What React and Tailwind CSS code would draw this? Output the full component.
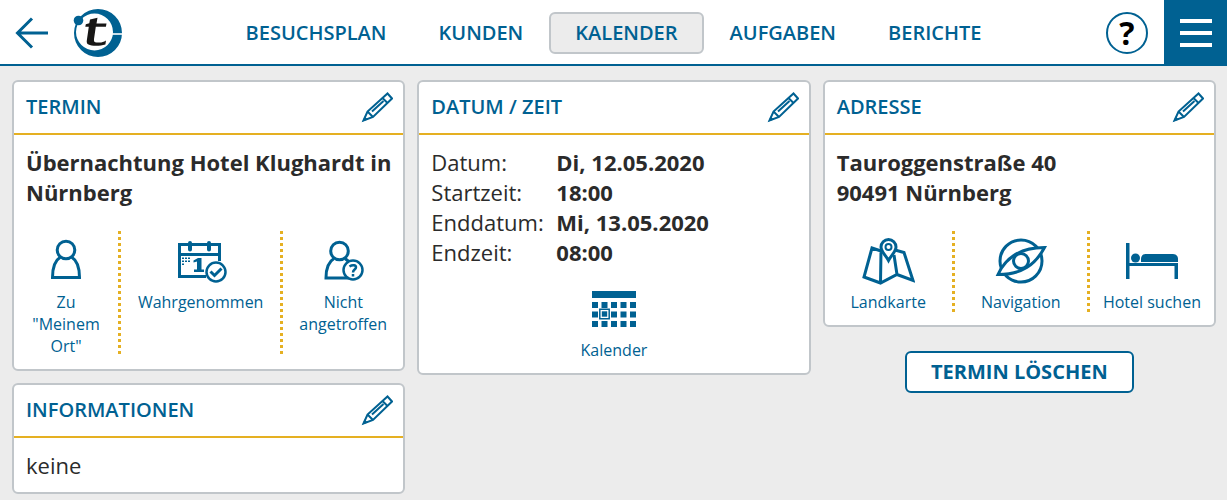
import React from 'react';

const BackIcon = () => (
  <svg width="34" height="32" viewBox="0 0 34 32" fill="none" stroke="currentColor" strokeWidth="3">
    <path d="M33 16H3M17 1.5 2.5 16 17 30.5" />
  </svg>
);

const Logo = () => (
  <svg width="50" height="50" viewBox="0 0 50 50">
    <path
      fill="#006192"
      fillRule="evenodd"
      d="M25 1a24 24 0 1 1 0 48a24 24 0 1 1 0-48ZM21.500 5.500a18.500 18.500 0 1 0 0 37a18.500 18.500 0 1 0 0-37Z"
    />
    <path fill="#fff" d="M39 25.200h11v1.600H39z" />
    <circle cx="5.500" cy="12.500" r="4.800" fill="#006192" />
    <path
      fill="#181716"
      d="M17 11.500 24.500 9.800 23.500 15.500h10l-.6 3.300H22.800L21 31c-.3 2.400.5 3.500 2.500 3.500h3c2.500 0 4-.6 6.500-2l-.6 4c-3 1-6 1.200-9 1.200-7.500 0-10.200-1.200-9.600-5.200l2-13.700h-3.500l.5-2.500 3.500-1z"
    />
  </svg>
);

const PencilIcon = () => (
  <svg width="32" height="32" viewBox="0 0 32 32" fill="none" stroke="currentColor" strokeWidth="2">
    <path d="M2.500 29.500 6.500 20.500 26.500 2.500 31 7.500 12 26zM6.500 20.500 12 26M21.500 7l5 5M11 20.500 22.500 10" />
    <path fill="currentColor" stroke="none" d="M1.500 30.500 3.500 25.500l3.500 3z" />
  </svg>
);

const PersonIcon = () => (
  <svg width="48" height="48" viewBox="0 0 48 48" fill="none" stroke="currentColor" strokeWidth="3">
    <circle cx="24" cy="13" r="8.800" />
    <path d="M18.500 20C12 24 10.500 31 10.500 40.500h27c0-9.500-1.500-16.500-8-20.500" />
  </svg>
);

const CalendarCheckIcon = () => (
  <svg width="52" height="48" viewBox="0 0 52 48" fill="none" stroke="currentColor">
    <path strokeWidth="3" d="M31 39.500H4.500v-32h40V24M4.500 17.500h40" />
    <path strokeWidth="4" strokeLinecap="round" d="M15 6v6.500M34 6v6.500" />
    <path strokeWidth="1.500" strokeDasharray="2 1" d="M7 21.200h8M7 24.200h8M7 27.200h3" />
    <path fill="currentColor" stroke="none" d="M18.500 23.500l4.500-2.500H26.500v11.500H29v2.500H19V32.500h3v-8l-3.500 1z" />
    <circle cx="41" cy="35" r="9.500" strokeWidth="2.500" fill="#fff" />
    <path strokeWidth="3" d="M35.500 34.500 39.500 38.500 46.500 31.500" />
  </svg>
);

const PersonQuestionIcon = () => (
  <svg width="48" height="48" viewBox="0 0 48 48" fill="none" stroke="currentColor">
    <circle cx="20.500" cy="14" r="8.800" strokeWidth="3" />
    <path strokeWidth="3" d="M15 21.500C9 25 7 32 7 41h24M26 21.500l5 4" />
    <circle cx="34" cy="33" r="9.500" strokeWidth="2.500" fill="#fff" />
    <path strokeWidth="2.500" d="M30.500 29.500c3-2 6.500-1.500 6.500.8 0 2.400-3 2.200-3 5.200M34 37v2.500" />
  </svg>
);

const CalendarIcon = () => (
  <svg width="44" height="38" viewBox="0 0 44 38" fill="currentColor">
    <path d="M0 1h44v7H0z" />
    <path
      fill="none"
      stroke="currentColor"
      strokeWidth="6"
      strokeDasharray="6 3.500"
      d="M0 15h44M0 24.500h44M0 34h44"
    />
    <path fill="#fff" stroke="currentColor" strokeWidth="1.500" d="M7.800 19.300h9.400v9.400H7.800z" />
    <path d="M9.800 21.300h5.400v5.400H9.800z" />
  </svg>
);

const MapIcon = () => (
  <svg width="54" height="48" viewBox="0 0 54 48" fill="none" stroke="currentColor" strokeWidth="3">
    <path d="M20 14 11 11 3 40l16.500 6L36 37.500 52 43.500 43 15.500l-9-2.500M20 14l-.5 32M33 18l3 19.500" />
    <path fill="#fff" d="M27.500 23.500C24.500 18 20 14.500 20 10a7.500 7.500 0 0 1 15 0c0 4.500-4.500 8-7.500 13.500z" />
    <circle cx="27.500" cy="10" r="3" strokeWidth="2" />
  </svg>
);

const CompassIcon = () => (
  <svg width="54" height="48" viewBox="0 0 54 48" fill="none" stroke="currentColor" strokeWidth="3">
    <circle cx="27" cy="24" r="21" />
    <path fill="#fff" d="M4 37.500C12 20 26 10.500 50.500 10.500 41 28 28 37.500 4 37.500z" />
    <circle cx="27" cy="24" r="7.500" />
  </svg>
);

const BedIcon = () => (
  <svg width="52" height="48" viewBox="0 0 52 48" fill="currentColor">
    <path d="M0 6h3.500v20H52v16h-3.500V29h-45v13H0z" />
    <circle cx="9.500" cy="21" r="4.500" />
    <path d="M15 25v-3c0-3 1.500-5 4.500-5H47c3 0 5 2 5 5v3z" />
  </svg>
);

const NAV_ITEMS = ['Besuchsplan', 'Kunden', 'Kalender', 'Aufgaben', 'Berichte'];

const Header = ({ active }) => (
  <header className="grid grid-cols-[1fr_auto_1fr] items-center h-[66px] bg-white border-b-2 border-[#006192]">
    <div className="flex items-center gap-6 pl-[15px]">
      <button type="button" aria-label="Zurück">
        <BackIcon />
      </button>
      <a href="#start" aria-label="Startseite">
        <Logo />
      </a>
    </div>

    <nav className="flex items-center">
      {NAV_ITEMS.map((item) => (
        <a
          key={item}
          href={`#${item.toLowerCase()}`}
          className={`flex items-center h-[42px] px-6 border-2 rounded-md text-xl font-semibold uppercase ${
            item === active ? 'bg-[#ececec] border-[#c1c6ca]' : 'border-transparent'
          }`}
        >
          {item}
        </a>
      ))}
    </nav>

    <div className="flex items-center justify-end gap-4 h-[66px]">
      <button
        type="button"
        aria-label="Hilfe"
        className="flex items-center justify-center size-[42px] border-2 border-[#006192] rounded-full text-[32px] leading-none font-bold text-black"
      >
        ?
      </button>
      <button
        type="button"
        aria-label="Menü"
        className="flex flex-col items-center justify-center gap-2 w-[63px] h-full bg-[#006192]"
      >
        <span className="w-8 h-1 bg-white" />
        <span className="w-8 h-1 bg-white" />
        <span className="w-8 h-1 bg-white" />
      </button>
    </div>
  </header>
);

const Card = ({ title, children }) => (
  <section className="bg-white border-2 border-[#c1c6ca] rounded-md">
    <div className="flex items-center justify-between h-[53px] pl-3 pr-[10px] pb-[2px] border-b-2 border-[#e5b022]">
      <h2 className="text-xl font-semibold uppercase">{title}</h2>
      <button type="button" aria-label={`${title} bearbeiten`}>
        <PencilIcon />
      </button>
    </div>
    <div className="py-3 text-[22px] leading-[30px] text-[#2b2b2b]">{children}</div>
  </section>
);

const Action = ({ icon, children }) => (
  <button
    type="button"
    className="flex flex-col items-center justify-start gap-[6px] px-3 text-base leading-[22px] text-[#006192]"
  >
    <span className="flex items-center h-[54px] pt-[6px]">{icon}</span>
    <span>{children}</span>
  </button>
);

const Divider = () => (
  <div className="bg-[repeating-linear-gradient(to_bottom,#e5b022_0_3px,transparent_3px_6px)]" />
);

const DATES = [
  ['Datum:', 'Di, 12.05.2020'],
  ['Startzeit:', '18:00'],
  ['Enddatum:', 'Mi, 13.05.2020'],
  ['Endzeit:', '08:00'],
];

const App = () => {
  return (
    <div className="min-h-screen bg-[#ececec] text-[#006192] font-['Open_Sans',sans-serif]">
      <Header active="Kalender" />

      <main className="grid grid-cols-3 items-start gap-3 pt-[14px] pb-[6px] pl-3 pr-[11px]">
        <div className="flex flex-col gap-3">
          <Card title="Termin">
            <p className="pl-3 pr-2 font-bold">Übernachtung Hotel Klughardt in Nürnberg</p>
            <div className="grid grid-cols-[104fr_3px_159fr_3px_120fr] mt-6">
              <Action icon={<PersonIcon />}>Zu "Meinem Ort"</Action>
              <Divider />
              <Action icon={<CalendarCheckIcon />}>Wahrgenommen</Action>
              <Divider />
              <Action icon={<PersonQuestionIcon />}>Nicht angetroffen</Action>
            </div>
          </Card>

          <Card title="Informationen">
            <p className="px-3">keine</p>
          </Card>
        </div>

        <Card title="Datum / Zeit">
          <dl className="grid grid-cols-[125px_1fr] px-3">
            {DATES.map(([label, value]) => (
              <React.Fragment key={label}>
                <dt>{label}</dt>
                <dd className="font-bold">{value}</dd>
              </React.Fragment>
            ))}
          </dl>
          <div className="flex justify-center mt-3">
            <Action icon={<CalendarIcon />}>Kalender</Action>
          </div>
        </Card>

        <div className="flex flex-col items-center gap-6">
          <div className="w-full">
            <Card title="Adresse">
              <address className="px-3 font-bold not-italic">
                Tauroggenstraße 40
                <br />
                90491 Nürnberg
              </address>
              <div className="grid grid-cols-[127fr_3px_132fr_3px_124fr] mt-6">
                <Action icon={<MapIcon />}>Landkarte</Action>
                <Divider />
                <Action icon={<CompassIcon />}>Navigation</Action>
                <Divider />
                <Action icon={<BedIcon />}>Hotel suchen</Action>
              </div>
            </Card>
          </div>

          <button
            type="button"
            className="h-[42px] px-6 bg-white border-2 border-[#006192] rounded-md text-xl font-bold uppercase"
          >
            Termin löschen
          </button>
        </div>
      </main>
    </div>
  );
};

export default App;
